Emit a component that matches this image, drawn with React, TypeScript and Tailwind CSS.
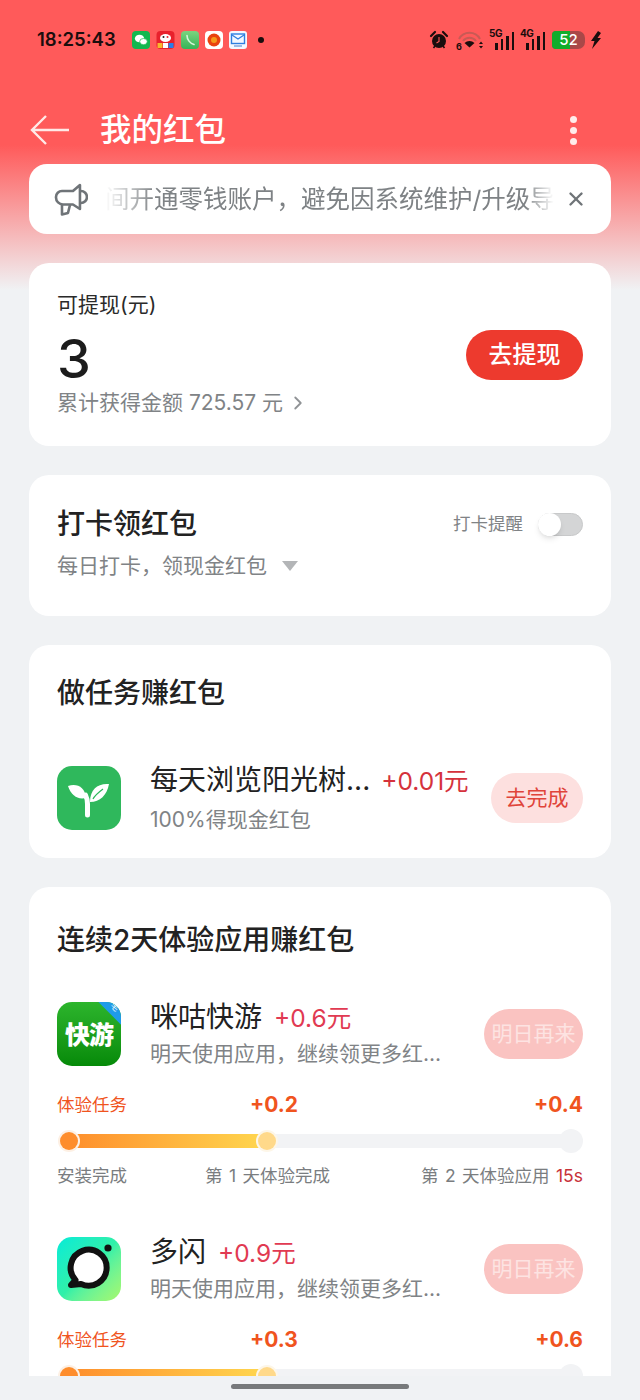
import type { ReactNode } from "react";
import { X, ChevronRight } from "lucide-react";

const font = "font-['Inter','Noto_Sans_CJK_SC',sans-serif]";

function WechatIcon() {
  return (
    <svg width="18" height="18" viewBox="0 0 18 18">
      <rect width="18" height="18" rx="4" fill="#12b84f" />
      <ellipse cx="7.500" cy="7.500" rx="4.600" ry="3.800" fill="#fff" />
      <ellipse cx="11.500" cy="10.600" rx="3.800" ry="3.100" fill="#fff" stroke="#12b84f" strokeWidth="0.7" />
    </svg>
  );
}

function DogIcon() {
  return (
    <svg width="19" height="18" viewBox="0 0 18 18">
      <rect width="18" height="18" rx="4" fill="#e8212c" />
      <ellipse cx="9" cy="7" rx="5.500" ry="4" fill="#fff" />
      <circle cx="7" cy="6" r="1" fill="#222" />
      <circle cx="11" cy="6" r="1" fill="#e8212c" />
      <rect x="1" y="12" width="5" height="5" fill="#f8b62d" />
      <rect x="6.500" y="12" width="5" height="5" fill="#fff" />
      <rect x="12" y="12" width="5" height="5" fill="#2b7de9" />
    </svg>
  );
}

function PhoneIcon() {
  return (
    <svg width="18" height="18" viewBox="0 0 18 18">
      <defs>
        <linearGradient id="ph" x1="0" y1="0" x2="0" y2="1">
          <stop offset="0" stopColor="#7bd37f" />
          <stop offset="1" stopColor="#35b558" />
        </linearGradient>
      </defs>
      <rect width="18" height="18" rx="4" fill="url(#ph)" />
      <path d="M6 4.500c0 4 3 8 7 9" stroke="#d8f5da" strokeWidth="1.600" fill="none" strokeLinecap="round" />
    </svg>
  );
}

function OrangeIcon() {
  return (
    <svg width="18" height="18" viewBox="0 0 18 18">
      <rect width="18" height="18" rx="4" fill="#fff" />
      <circle cx="9" cy="9" r="6.500" fill="#e9420f" />
      <circle cx="9" cy="9" r="3" fill="#f59a1b" />
    </svg>
  );
}

function MailIcon() {
  return (
    <svg width="18" height="18" viewBox="0 0 18 18">
      <rect width="18" height="18" rx="3" fill="#f4f8ff" />
      <rect x="2.500" y="3" width="13" height="9.500" fill="none" stroke="#2f7fe0" strokeWidth="1.400" />
      <path d="M3 4l6 4 6-4" stroke="#2f7fe0" strokeWidth="1.200" fill="none" />
      <rect x="5" y="14" width="8" height="2" fill="#9dbbe6" />
    </svg>
  );
}

function Alarm() {
  return (
    <svg width="20" height="20" viewBox="0 0 20 20">
      <circle cx="10" cy="11" r="7" fill="#1a0d0d" />
      <path d="M2 6l4-4M18 6l-4-4" stroke="#1a0d0d" strokeWidth="2.200" strokeLinecap="round" />
      <path d="M4.500 18l1.500-2M15.500 18L14 16" stroke="#1a0d0d" strokeWidth="1.600" />
      <path d="M10 7v4.500L7.500 13" stroke="#ff5a5a" strokeWidth="1.100" fill="none" />
    </svg>
  );
}

function Wifi() {
  return (
    <svg width="28" height="20" viewBox="0 0 28 20">
      <path d="M3 9a12 12 0 0 1 21 0" stroke="#c85a55" strokeWidth="2" fill="none" />
      <path d="M7 11a8 8 0 0 1 13 0" stroke="#c85a55" strokeWidth="2" fill="none" />
      <path d="M8.500 13a7.500 7.500 0 0 1 10 0l-5 4.500z" fill="#1a0d0d" />
      <path d="M25 11.500l2 2.500h-4zM25 18.500l2-2.500h-4z" fill="#1a0d0d" />
      <text x="0" y="19.500" fontSize="9" fontWeight="700" fill="#1a0d0d" fontFamily="Inter">6</text>
    </svg>
  );
}

function Signal({ label }: { label: string }) {
  return (
    <div className="relative h-[20px] w-[25px]">
      <span className="absolute left-0 top-[-2px] text-[10px] leading-[10px] font-bold tracking-[-0.5px] text-[#1a0d0d]">{label}</span>
      <div className="absolute bottom-0 right-0 flex items-end gap-[3px]">
        <div className="h-[7px] w-[2.500px] bg-[#1a0d0d]" />
        <div className="h-[11px] w-[2.500px] bg-[#1a0d0d]" />
        <div className="h-[14px] w-[2.500px] bg-[#1a0d0d]" />
        <div className="h-[18px] w-[2.500px] bg-[#1a0d0d]" />
      </div>
    </div>
  );
}

function Megaphone() {
  return (
    <svg width="34" height="33" viewBox="0 0 34 33" fill="none" stroke="#6f7478" strokeWidth="2.600" strokeLinejoin="round">
      <path d="M26 2v24l-7-4.500H9a7 7 0 0 1-7-7V14a6 6 0 0 1 6-6h11z" />
      <path d="M27 8a6 6 0 0 1 0 12" />
      <path d="M8 22v9.500l6-1.500 2-8" />
    </svg>
  );
}

function SproutIcon() {
  return (
    <div className="h-[64px] w-[64px] shrink-0 overflow-hidden rounded-[15px] bg-[#2fb85c]">
      <svg width="64" height="64" viewBox="0 0 64 64">
        <path d="M11 20C20 17 28 21 29 32 20 34 14 29 11 20z" fill="#fff" />
        <path d="M52 18C41 17 33 23 33 36 43 36 50 29 52 18z" fill="#fff" />
        <path d="M36 33C38 29 42 26 46 23" stroke="#2fb85c" strokeWidth="1.200" fill="none" />
        <path d="M30.500 49V38c0-3-.5-6-2-9" stroke="#fff" strokeWidth="5" strokeLinecap="round" fill="none" />
      </svg>
    </div>
  );
}

function KuaiyouIcon() {
  return (
    <div className="relative flex h-[64px] w-[64px] shrink-0 items-center justify-center overflow-hidden rounded-[15px] bg-gradient-to-b from-[#2cb52c] to-[#058a08]">
      <div className="absolute right-[-16px] top-[-16px] h-[32px] w-[32px] rotate-45 bg-[#1f9be8]" />
      <span className="absolute right-[2px] top-[0px] rotate-45 text-[8px] leading-[10px] text-white">毛</span>
      <span className="mt-[4px] text-[25px] leading-none font-black tracking-[-1px] text-white">快游</span>
    </div>
  );
}

function DuoshanIcon() {
  return (
    <div className="h-[64px] w-[64px] shrink-0 overflow-hidden rounded-[15px] bg-gradient-to-br from-[#00ebd8] via-[#30f0a8] to-[#a6f86a]">
      <svg width="64" height="64" viewBox="0 0 64 64" fill="none">
        <path d="M18.500 43A18 18 0 1 1 24 47L14 48z" fill="#fff" stroke="#111" strokeWidth="6" strokeLinejoin="round" />
        <circle cx="51" cy="11" r="3.600" fill="#111" />
      </svg>
    </div>
  );
}

function Progress({ left, right, clip }: { left: string; right: string; clip?: boolean }) {
  return (
    <div className="mt-[25px]">
      <div className="relative flex h-[24px] items-center justify-between">
        <span className="text-[17.500px] leading-[24px] text-[#f0541e]">体验任务</span>
        <span className="absolute left-[193px] text-[21px] leading-[24px] font-bold text-[#f0541e]">{left}</span>
        <span className="text-[21px] leading-[24px] font-bold text-[#f0541e]">{right}</span>
      </div>
      <div className="relative mt-[14px] h-[20px]">
        <div className="absolute inset-x-[3px] top-[3px] h-[14px] rounded-full bg-[#f2f3f5]" />
        <div className="absolute left-[3px] top-[3px] h-[14px] w-[210px] rounded-full bg-gradient-to-r from-[#fd8a2a] to-[#ffd84f]" />
        <div className="absolute left-[3px] top-[1px] h-[18px] w-[18px] rounded-full bg-[#fe8d2c] ring-2 ring-[#fdf0e4]" />
        <div className="absolute left-[201px] top-[1px] h-[18px] w-[18px] rounded-full bg-[#ffd98a] ring-2 ring-[#fdf6e8]" />
        <div className="absolute right-0 top-[-2px] h-[24px] w-[24px] rounded-full bg-[#f2f3f5]" />
      </div>
      {!clip && (
        <div className="relative mt-[13px] flex h-[24px] items-center justify-between text-[17.500px] leading-[24px] text-[#7a7d80]">
          <span>安装完成</span>
          <span className="absolute left-[148px] [word-spacing:1.500px]">第 1 天体验完成</span>
          <span className="[word-spacing:1.500px]">
            第 2 天体验应用 <span className="text-[#c8333a]">15s</span>
          </span>
        </div>
      )}
    </div>
  );
}

function AppRow({ icon, name, reward }: { icon: ReactNode; name: string; reward: string }) {
  return (
    <div className="flex items-center">
      {icon}
      <div className="ml-[29px] min-w-0 flex-1">
        <div className="flex items-baseline">
          <span className="text-[28px] leading-[36px] text-[#222]">{name}</span>
          <span className="ml-[12px] text-[24.500px] leading-[36px] text-[#e13a52]">{reward}</span>
        </div>
        <p className="mt-[4px] text-[21px] leading-[28px] text-[#808386]">明天使用应用，继续领更多红...</p>
      </div>
      <div className="h-[50px] w-[99px] shrink-0 rounded-full bg-[#fac3c1] text-center text-[21px] leading-[50px] text-[#fde3e2]">
        明日再来
      </div>
    </div>
  );
}

export default function App() {
  return (
    <div className={`relative flex h-[1400px] w-[640px] flex-col overflow-hidden bg-[linear-gradient(to_bottom,#ff5a5a_0px,#ff5a5a_145px,#f0f2f4_290px)] ${font}`}>
      {/* status bar */}
      <div className="flex h-[80px] shrink-0 items-center justify-between pl-[37px] pr-[38px]">
        <div className="flex items-center">
          <span className="w-[78px] whitespace-nowrap text-[18.500px] font-semibold text-[#1a0d0d]">18:25:43</span>
          <div className="ml-[17px] flex items-center gap-[6px]">
            <WechatIcon />
            <DogIcon />
            <PhoneIcon />
            <OrangeIcon />
            <MailIcon />
          </div>
          <div className="ml-[11px] h-[6px] w-[6px] rounded-full bg-[#1a0d0d]" />
        </div>
        <div className="flex items-center">
          <Alarm />
          <div className="ml-[7px]"><Wifi /></div>
          <div className="ml-[5px]"><Signal label="5G" /></div>
          <div className="ml-[6px]"><Signal label="4G" /></div>
          <div className="relative ml-[7px] flex h-[18px] w-[33px] overflow-hidden rounded-l-[4px] rounded-r-[7px] bg-[#a94848]">
            <div className="h-full w-[18px] bg-[#12ad2b]" />
            <span className="absolute inset-0 text-center text-[15px] leading-[18px] font-medium text-white">52</span>
          </div>
          <svg className="ml-[5px]" width="12" height="18" viewBox="0 0 12 18" fill="#1a0d0d">
            <path d="M8 0L1 10h3.500L2 18l9-11H7.500L11 2z" />
          </svg>
        </div>
      </div>

      {/* toolbar */}
      <div className="flex h-[84px] shrink-0 items-center justify-between pl-[30px] pr-[63px] pt-[16px]">
        <div className="flex items-center">
          <svg width="40" height="32" viewBox="0 0 40 32" fill="none" stroke="#ffe9e7" strokeWidth="2.400">
            <path d="M39 16H2M16 2L2 16l14 14" />
          </svg>
          <h1 className="ml-[30px] text-[31.500px] leading-[40px] font-medium text-white">我的红包</h1>
        </div>
        <div className="flex flex-col gap-[4px]">
          <div className="h-[7px] w-[7px] rounded-full bg-[#ffecea]" />
          <div className="h-[7px] w-[7px] rounded-full bg-[#ffecea]" />
          <div className="h-[7px] w-[7px] rounded-full bg-[#ffecea]" />
        </div>
      </div>

      <div className="flex shrink-0 flex-col gap-[29px] px-[29px]">
        {/* notice */}
        <div className="flex h-[70px] shrink-0 items-center rounded-[18px] bg-white pl-[25px] pr-[24px]">
          <Megaphone />
          <div className="ml-[17px] w-[450px] overflow-hidden whitespace-nowrap text-[24.500px] leading-[70px] text-[#7e8285] [mask-image:linear-gradient(to_right,transparent,#000_50px,#000_420px,transparent)]">
            间开通零钱账户，避免因系统维护/升级导
          </div>
          <X className="ml-[11px] shrink-0 text-[#6f7478]" size={22} strokeWidth={2.600} />
        </div>

        {/* balance */}
        <div className="h-[183px] shrink-0 rounded-[20px] bg-white px-[28px] pt-[27px]">
          <p className="text-[21px] leading-[30px] text-[#2a2a2a]">可提现(元)</p>
          <div className="mt-[12px] flex items-center justify-between">
            <span className="text-[54px] leading-[54px] font-medium text-[#1c1c1c]">3</span>
            <div className="-mt-[8px] h-[50px] w-[117px] rounded-full bg-[#ed3a2e] text-center text-[24px] leading-[50px] font-medium text-white">
              去提现
            </div>
          </div>
          <div className="mt-[2px] flex items-center text-[21px] leading-[30px] text-[#808386]">
            累计获得金额 725.57 元
            <ChevronRight className="ml-[4px] text-[#909396]" size={22} />
          </div>
        </div>

        {/* check-in */}
        <div className="h-[141px] shrink-0 rounded-[20px] bg-white px-[28px] pt-[31px]">
          <div className="flex items-center justify-between">
            <span className="text-[28px] leading-[36px] font-medium text-[#222]">打卡领红包</span>
            <div className="flex items-center">
              <span className="text-[17.500px] text-[#808386]">打卡提醒</span>
              <div className="relative ml-[15px] h-[23px] w-[45px] rounded-full border border-[#c8c9ca] bg-[#d4d5d6]">
                <div className="absolute left-[-1px] top-[-1px] h-[23px] w-[23px] rounded-full bg-white shadow-md" />
              </div>
            </div>
          </div>
          <div className="mt-[9px] flex items-center text-[21px] leading-[30px] text-[#808386]">
            每日打卡，领现金红包
            <span className="ml-[15px] h-0 w-0 border-x-[8px] border-t-[10px] border-x-transparent border-t-[#b3b5b7]" />
          </div>
        </div>

        {/* tasks */}
        <div className="h-[213px] shrink-0 rounded-[20px] bg-white px-[28px] pt-[30px]">
          <h2 className="text-[28px] leading-[36px] font-medium text-[#222]">做任务赚红包</h2>
          <div className="mt-[51px] flex items-center">
            <SproutIcon />
            <div className="ml-[29px] min-w-0 flex-1">
              <div className="flex items-baseline whitespace-nowrap">
                <span className="text-[28px] leading-[36px] text-[#222]">每天浏览阳光树...</span>
                <span className="ml-[11px] text-[24.500px] leading-[36px] text-[#d5323c]">+0.01元</span>
              </div>
              <p className="mt-[7px] text-[21px] leading-[28px] text-[#808386]">100%得现金红包</p>
            </div>
            <div className="h-[50px] w-[92px] shrink-0 rounded-full bg-[#fde0df] text-center text-[21px] leading-[50px] text-[#e0443a]">
              去完成
            </div>
          </div>
        </div>

        {/* experience apps */}
        <div className="h-[600px] shrink-0 rounded-[20px] bg-white px-[28px] pt-[35px]">
          <h2 className="text-[28px] leading-[36px] font-medium text-[#222]">连续2天体验应用赚红包</h2>
          <div className="mt-[41px]">
            <AppRow icon={<KuaiyouIcon />} name="咪咕快游" reward="+0.6元" />
            <Progress left="+0.2" right="+0.4" />
          </div>
          <div className="mt-[46px]">
            <AppRow icon={<DuoshanIcon />} name="多闪" reward="+0.9元" />
            <Progress left="+0.3" right="+0.6" clip />
          </div>
        </div>
      </div>

      {/* gesture bar */}
      <div className="absolute inset-x-0 bottom-0 h-[24px] bg-[#f0f2f4]">
        <div className="absolute left-[231px] top-[8px] h-[5px] w-[178px] rounded-full bg-[#77797b]" />
      </div>
    </div>
  );
}
